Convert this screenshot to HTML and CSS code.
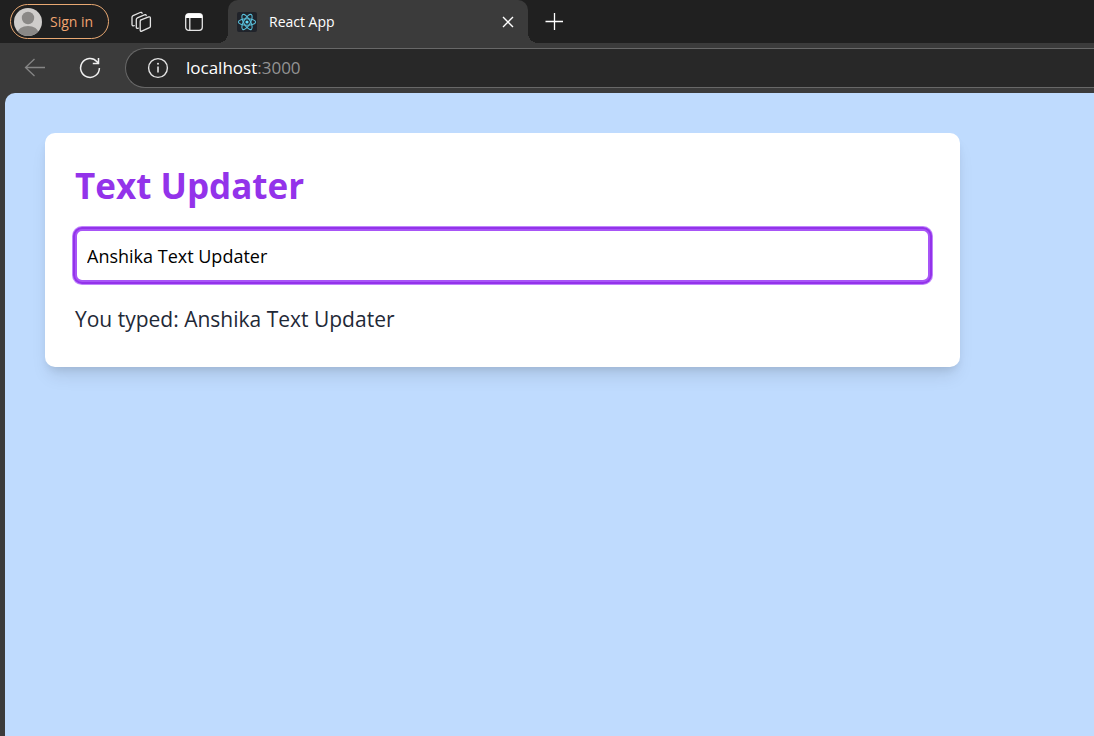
FILE: index.html
```html
<!DOCTYPE html>
<html lang="en">
<head>
<meta charset="utf-8">
<meta name="viewport" content="width=device-width, initial-scale=1">
<title>React App</title>
<link rel="stylesheet" href="styles.css">
</head>
<body>
<header class="browser">
  <div class="tab-strip">
    <button class="profile" type="button">
      <svg class="avatar" viewBox="0 0 28 28" aria-hidden="true">
        <defs><clipPath id="avatar-clip"><circle cx="14" cy="14" r="14"/></clipPath></defs>
        <circle cx="14" cy="14" r="14" fill="#cfcdcb"/>
        <g fill="#8a8886" clip-path="url(#avatar-clip)"><circle cx="14" cy="10" r="6.2"/><ellipse cx="14" cy="25" rx="10.5" ry="7"/></g>
      </svg>
      <span>Sign in</span>
    </button>
    <button class="icon-button workspaces" type="button" aria-label="Workspaces">
      <svg width="22" height="22" viewBox="0 0 22 22" fill="none" stroke="#e4e4e4" stroke-width="1.3" stroke-linejoin="round" stroke-linecap="round">
        <path d="M10.4 9.2 18.8 5.9Q20.4 5.4 20.4 7V15.2Q20.4 16.2 19.4 16.7L11.8 20.1Q10.2 20.7 10.2 19V10.5Q10.2 9.5 11.1 8.9Z"/>
        <path d="M8.3 17.2Q6.3 18 6.3 16V8.5Q6.3 7.3 7.4 6.8L14.4 3.8Q16 3.2 16.2 4.6"/>
        <path d="M4.2 14.7Q2 15.2 2 13.5V6.3Q2 5.1 3.1 4.6L10.2 1.5Q11.7 1 12.1 2.3"/>
      </svg>
    </button>
    <button class="icon-button tab-actions" type="button" aria-label="Tab actions">
      <svg width="18" height="18" viewBox="0 0 18 18" fill="none">
        <rect x=".7" y=".7" width="16.6" height="16.6" rx="3" stroke="#e4e4e4" stroke-width="1.3"/>
        <path d="M.7 5V3.5Q.7.7 3.5.7H14.5Q17.3.7 17.3 3.5V5Z" fill="#fff"/>
        <path d="M4.8 5V17" stroke="#e4e4e4" stroke-width="1.3"/>
      </svg>
    </button>
    <div class="tab">
      <svg class="favicon" viewBox="0 0 20 20" aria-hidden="true">
        <rect width="20" height="20" rx="2" fill="#20232a"/>
        <g fill="none" stroke="#58bdd8" stroke-width="1.1"><ellipse cx="10" cy="10" rx="8.6" ry="3.3"/><ellipse cx="10" cy="10" rx="8.6" ry="3.3" transform="rotate(60 10 10)"/><ellipse cx="10" cy="10" rx="8.6" ry="3.3" transform="rotate(120 10 10)"/></g>
        <circle cx="10" cy="10" r="1.6" fill="#61dafb"/>
      </svg>
      <span class="tab-title">React App</span>
      <button class="icon-button close" type="button" aria-label="Close tab">
        <svg width="12" height="12" viewBox="0 0 12 12" stroke="#fff" stroke-width="1.4"><path d="M1 1 11 11M11 1 1 11"/></svg>
      </button>
    </div>
    <button class="icon-button new-tab" type="button" aria-label="New tab">
      <svg width="18" height="18" viewBox="0 0 18 18" stroke="#fff" stroke-width="1.3"><path d="M9.5 0V17M.5 8.5H18"/></svg>
    </button>
  </div>
  <div class="toolbar">
    <button class="icon-button back" type="button" aria-label="Back">
      <svg width="22" height="20" viewBox="0 0 22 20" fill="none" stroke="#858585" stroke-width="1.3"><path d="M21 9.5H1.5M10.5 1 1.5 9.5 10.5 18"/></svg>
    </button>
    <button class="icon-button refresh" type="button" aria-label="Refresh">
      <svg width="22" height="22" viewBox="0 0 22 22" fill="none" stroke="#f0f0f0" stroke-width="1.5"><path d="M20.4 11A9.4 9.4 0 1 1 18 4.7L19.4 6.3M19.5 1V6.5H13.8"/></svg>
    </button>
    <div class="address">
      <svg width="22" height="22" viewBox="0 0 22 22" fill="none" stroke="#e4e4e4" aria-hidden="true"><circle cx="11" cy="11" r="9.4" stroke-width="1.4"/><path d="M11 9.5V15.5" stroke-width="1.6"/><circle cx="11" cy="6.8" r="1" fill="#e4e4e4" stroke="none"/></svg>
      <span class="url"><span class="host">localhost</span>:3000</span>
    </div>
  </div>
</header>
<main class="page">
  <section class="card">
    <h1 class="title">Text Updater</h1>
    <input class="text-input" type="text" value="Anshika Text Updater" aria-label="Text">
    <p class="result">You typed: Anshika Text Updater</p>
  </section>
</main>
</body>
</html>
```

FILE: styles.css
```css
* {
  box-sizing: border-box;
}

body {
  margin: 0;
  min-height: 100vh;
  display: flex;
  flex-direction: column;
  background: #3b3b3b;
  font-family: "Segoe UI", "Open Sans", "Noto Sans", sans-serif;
  overflow-x: hidden;
}

button {
  font: inherit;
  cursor: pointer;
}

svg {
  display: block;
  flex: none;
}

.tab-strip {
  display: flex;
  align-items: center;
  height: 43px;
  padding-left: 10px;
  background: #202020;
}

.profile {
  display: flex;
  align-items: center;
  gap: 8px;
  width: 99px;
  height: 35px;
  padding: 0 3px;
  border: 1px solid #e8a872;
  border-radius: 18px;
  background: transparent;
  color: #f0a470;
  font-size: 14px;
  white-space: nowrap;
}

.avatar {
  width: 28px;
  height: 28px;
}

.icon-button {
  display: flex;
  align-items: center;
  justify-content: center;
  flex: none;
  padding: 0;
  border: 0;
  background: transparent;
}

.workspaces {
  margin-left: 21px;
}

.tab-actions {
  margin-left: 33px;
}

.tab {
  position: relative;
  display: flex;
  align-items: center;
  gap: 12px;
  width: 300px;
  height: 43px;
  margin-left: 25px;
  padding: 0 14px 0 9px;
  border-radius: 10px 10px 0 0;
  background: #3b3b3b;
  color: #fff;
  font-size: 14px;
}

.tab::before,
.tab::after {
  content: "";
  position: absolute;
  bottom: 0;
  width: 10px;
  height: 10px;
}

.tab::before {
  right: 100%;
  background: radial-gradient(circle at 0 0, #202020 10px, #3b3b3b 10px);
}

.tab::after {
  left: 100%;
  background: radial-gradient(circle at 100% 0, #202020 10px, #3b3b3b 10px);
}

.favicon {
  width: 20px;
  height: 20px;
}

.tab-title {
  flex: 1;
}

.new-tab {
  margin-left: 17px;
}

.toolbar {
  display: flex;
  align-items: center;
  height: 50px;
  padding-left: 24px;
}

.refresh {
  margin-left: 33px;
}

.address {
  display: flex;
  align-items: center;
  flex: 1;
  gap: 17px;
  height: 40px;
  margin-left: 24px;
  padding-left: 21px;
  border: 1px solid #686868;
  border-right: 0;
  border-radius: 20px 0 0 20px;
  background: #282828;
}

.url {
  color: #939393;
  font-size: 17px;
  line-height: 22px;
}

.host {
  color: #fff;
}

.page {
  flex: 1;
  margin-left: 5px;
  padding: 40px;
  border-radius: 10px 0 0 0;
  background: #bfdbfe;
}

.card {
  max-width: 915px;
  padding: 30px;
  border-radius: 10px;
  background: #fff;
  box-shadow: 0 12px 18px -4px rgb(0 0 0 / 10%), 0 5px 8px -3px rgb(0 0 0 / 10%);
}

.title {
  margin: 0 0 20px;
  color: #9333ea;
  font-size: 35px;
  font-weight: 700;
  line-height: 46px;
}

.text-input {
  display: block;
  width: 100%;
  height: 53px;
  margin: 0 0 20px;
  padding: 0 10px;
  border: 2px solid #a855f7;
  border-radius: 7px;
  outline: 0;
  box-shadow: 0 0 0 2px #9333ea, 0 0 0 3px #c084fc;
  background: #fff;
  color: #000;
  font-family: inherit;
  font-size: 18px;
}

.result {
  margin: 0;
  color: #1f2937;
  font-size: 21px;
  line-height: 35px;
}
```
